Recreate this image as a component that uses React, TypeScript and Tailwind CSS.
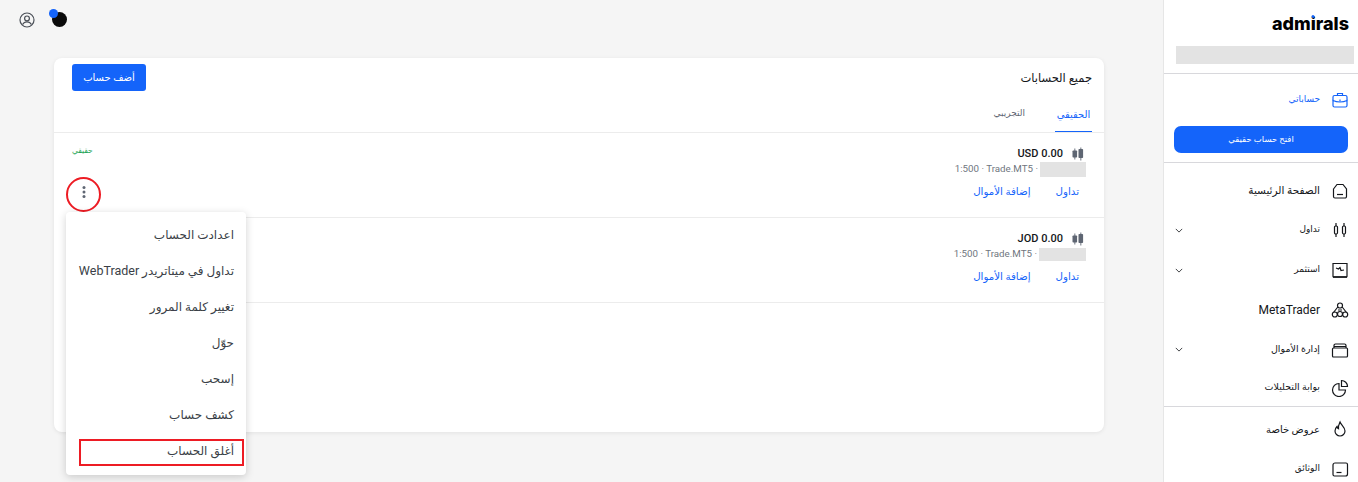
const blue = "text-[#1464fa]";

const Icon = ({ children, className = "text-[#14161a]" }: { children: React.ReactNode; className?: string }) => (
  <svg viewBox="0 0 18 18" fill="none" stroke="currentColor" strokeWidth="1.2" className={`w-[18px] h-[18px] shrink-0 ${className}`}>
    {children}
  </svg>
);

const Chevron = () => (
  <svg viewBox="0 0 10 6" fill="none" stroke="currentColor" strokeWidth="1" className="w-[8px] h-[5px] text-[#14161a]">
    <path d="M1 1l4 4 4-4" />
  </svg>
);

const Candles = () => (
  <svg viewBox="0 0 14 14" className="w-[14px] h-[14px] text-[#5f6673]" fill="currentColor">
    <rect x="1.5" y="3.5" width="4.6" height="7" rx="0.8" />
    <rect x="3.4" y="1.5" width="0.9" height="11" />
    <rect x="7.5" y="2" width="4.6" height="9" rx="0.8" />
    <rect x="9.4" y="0.5" width="0.9" height="13" />
  </svg>
);

const NavRow = ({ label, icon, chevron, h, size = "text-[10px]" }: { label: string; icon: React.ReactNode; chevron?: boolean; h: string; size?: string }) => (
  <div className={`flex items-center justify-between shrink-0 pl-[11px] pr-[9px] ${h}`}>
    <div>{chevron && <Chevron />}</div>
    <div className="flex items-center gap-[11px]">
      <span className={`text-[#14161a] ${size}`}>{label}</span>
      {icon}
    </div>
  </div>
);

const AccountRow = ({ currency, maskW, maskH }: { currency: string; maskW: string; maskH: string }) => (
  <div className="pt-[13px] pr-[18px] h-[85px] border-b border-[#ececec] flex flex-col items-end">
    <div className="flex items-center gap-[8px] h-[16px] pr-[1px]">
      <span className="text-[11px] font-medium text-[#14161a]" dir="ltr">{currency} 0.00</span>
      <Candles />
    </div>
    <div className="flex items-center text-[9.75px] text-[#6f7680] h-[15px]" dir="ltr">
      <span>1:500 · Trade.MT5 ·</span>
      <span className={`inline-block bg-[#e3e3e3] ml-[2px] ${maskW} ${maskH}`} />
    </div>
    <div className={`flex gap-[25px] mt-[7px] pr-[7px] text-[10.25px] ${blue}`} dir="rtl">
      <span>تداول</span>
      <span>إضافة الأموال</span>
    </div>
  </div>
);

export default function App() {
  const menu: React.ReactNode[] = [
    "اعدادت الحساب",
    <>تداول في ميتاتريدر <span className="text-[12.5px]">WebTrader</span></>,
    "تغيير كلمة المرور",
    "حوّل",
    "إسحب",
    "كشف حساب",
    "أغلق الحساب",
  ];

  return (
    <div className="flex h-[482px] w-[1358px] overflow-hidden bg-[#f5f5f5] font-['Roboto','DejaVu_Sans',sans-serif]">
      <main className="relative flex-1 min-w-0">
        <header className="flex items-start gap-[14px] pl-[19px] pt-[9px] h-[58px]">
          <svg viewBox="0 0 16 16" fill="none" stroke="#4a4f57" strokeWidth="1.2" className="w-[16px] h-[16px] mt-[3px]">
            <circle cx="8" cy="8" r="7" />
            <circle cx="8" cy="6.4" r="2.4" />
            <path d="M3.6 12.6c1-2 2.6-2.8 4.4-2.8s3.4.8 4.4 2.8" />
          </svg>
          <div className="relative w-[18px] h-[18px]">
            <div className="absolute left-[3px] top-[3px] w-[15px] h-[15px] rounded-full bg-[#0a0a0a]" />
            <div className="absolute left-0 top-0 w-[9px] h-[9px] rounded-full bg-[#1464fa]" />
          </div>
        </header>

        <section className="ml-[54px] w-[1050px] h-[374px] bg-white rounded-[8px] shadow-[0_1px_4px_rgba(0,0,0,0.08)]">
          <div className="h-[75px] border-b border-[#ececec] relative pr-[12px]">
            <div className="flex justify-between pl-[18px] pt-[6px]">
              <button className="w-[74px] h-[27px] rounded-[3px] bg-[#1464fa] text-white text-[10px]">أضف حساب</button>
              <span className="text-[11.5px] text-[#14161a] mt-[6px]">جميع الحسابات</span>
            </div>
            <div className="absolute right-[12px] bottom-0 flex items-end gap-[30px] text-[10px]" dir="rtl">
              <span className={`w-[37px] h-[25px] text-center border-b border-[#1464fa] ${blue}`}>الحقيقي</span>
              <span className="h-[25px] text-[#5f6673] text-[9px]">التجريبي</span>
            </div>
          </div>

          <div className="relative ml-[192px]">
            <AccountRow currency="USD" maskW="w-[46px]" maskH="h-[15px]" />
            <AccountRow currency="JOD" maskW="w-[47px]" maskH="h-[13px]" />
          </div>
          <div className="absolute left-[72px] top-[145px] text-[7.5px] text-[#12a150]">حقيقي</div>
        </section>

        {/* overlays: dots, annotation ring, dropdown */}
        <svg viewBox="0 0 4 12" className="absolute left-[82px] top-[186px] w-[4px] h-[12px]" fill="#5f6673">
          <circle cx="2" cy="1.6" r="1.5" />
          <circle cx="2" cy="6" r="1.5" />
          <circle cx="2" cy="10.4" r="1.5" />
        </svg>
        <div className="absolute left-[66px] top-[177px] w-[35px] h-[35px] rounded-full border-2 border-[#ed1c24]" />

        <div className="absolute left-[66px] top-[212px] w-[180px] h-[263px] bg-white rounded-[4px] shadow-[0_2px_8px_rgba(0,0,0,0.18)] flex flex-col items-end pr-[12px] pt-[5px]">
          {menu.map((m, i) => (
            <div key={i} className="h-[36px] flex items-center text-[12px] text-[#3a3f47]" dir="rtl">
              <span>{m}</span>
            </div>
          ))}
        </div>
        <div className="absolute left-[79px] top-[439px] w-[165px] h-[27px] border-2 border-[#ed1c24]" />
      </main>

      <aside className="w-[195px] shrink-0 bg-white border-l border-[#e6e6e6] flex flex-col">
        <div className="h-[74px] shrink-0 border-b border-[#d8d8dc] flex flex-col items-end">
          <div className="text-[18px] leading-[19px] font-extrabold text-black mt-[14px] mr-[9px] font-['Inter',sans-serif]">
            adm
            <span className="relative">
              i
              <span className="absolute left-1/2 -translate-x-1/2 top-[2px] w-[3px] h-[3px] rounded-full bg-[#1464fa]" />
            </span>
            rals
          </div>
          <div className="w-[178px] h-[18px] bg-[#e3e3e3] mt-[13px] mr-[4px]" />
        </div>

        <div className="h-[89px] shrink-0 border-b border-[#d8d8dc] flex flex-col">
          <div className="h-[52px] flex items-center justify-end pr-[9px] gap-[11px]">
            <span className={`text-[9px] ${blue}`}>حساباتي</span>
            <Icon className={blue}>
              <path d="M2 9.5V6a1.500 1.500 0 0 1 1.500-1.500h11A1.500 1.500 0 0 1 16 6v3.500" />
              <path d="M2 9.5c2 1 4.500 1.500 7 1.500s5-.5 7-1.500V14.500a1.500 1.500 0 0 1-1.500 1.500h-11A1.500 1.500 0 0 1 2 14.500z" />
              <path d="M6.500 4.500V2.500h5v2M9 8.500v2" />
            </Icon>
          </div>
          <button className="mx-auto w-[174px] h-[27px] rounded-[7px] bg-[#1464fa] text-white text-[8.5px]">افتح حساب حقيقي</button>
        </div>

        <NavRow h="h-[47px] pt-[8px]" size="text-[10.5px]" label="الصفحة الرئيسية" icon={
          <Icon><path d="M2.500 7L6 2.500h6L15.500 7v7.500a1.500 1.500 0 0 1-1.500 1.500H4a1.500 1.500 0 0 1-1.500-1.500z" /><path d="M6 12.500h6" /></Icon>
        } />
        <NavRow chevron h="h-[40px]" size="text-[9px]" label="تداول" icon={
          <Icon><rect x="3.500" y="5" width="3" height="8" rx="1.200" /><path d="M5 2v3M5 13v3M13 2v3M13 13v3" /><rect x="11.500" y="5" width="3" height="8" rx="1.200" /></Icon>
        } />
        <NavRow chevron h="h-[40px]" size="text-[9px]" label="استثمر" icon={
          <Icon><path d="M2 2.500h14V15.500a.5.5 0 0 1-.5.5h-13a.5.5 0 0 1-.5-.5z" /><path d="M2 16h14" strokeWidth="1.6" /><path d="M5 7l2.500 1 1.500-1.500 1 3 3-.5" /></Icon>
        } />
        <NavRow h="h-[40px]" size="text-[12px]" label="MetaTrader" icon={
          <Icon><circle cx="9" cy="4.500" r="2.500" /><circle cx="3.800" cy="13.500" r="2.500" /><circle cx="14.200" cy="13.500" r="2.500" /><circle cx="9" cy="13" r="2.500" /><path d="M6.800 6L2.500 11.500M11.200 6l4.300 5.500M7 9h4" /></Icon>
        } />
        <NavRow chevron h="h-[39px]" size="text-[9.5px]" label="إدارة الأموال" icon={
          <Icon><rect x="1.500" y="7" width="15" height="9" rx="1" /><path d="M3 7V4.500A1.500 1.500 0 0 1 4.500 3h9A1.500 1.500 0 0 1 15 4.500V7M3 5.500h12" /></Icon>
        } />
        <NavRow h="h-[38px] border-b border-[#d8d8dc]" size="text-[9.5px]" label="بوابة التحليلات" icon={
          <Icon><path d="M8 4.500a6.500 6.500 0 1 0 6.500 6.500H8z" /><path d="M10.500 1.500a6 6 0 0 1 6 6h-6z" /></Icon>
        } />
        <NavRow h="h-[44px]" size="text-[10px]" label="عروض خاصة" icon={
          <Icon><path d="M9 2c1 3 5 5 5 9a5 5 0 0 1-10 0c0-2 1-3.500 2-4.500.3 1.200.8 2 1.500 2.300C7.200 6.500 8 4 9 2z" /></Icon>
        } />
        <NavRow h="h-[36px]" size="text-[9px]" label="الوثائق" icon={
          <Icon><path d="M2 5a2 2 0 0 1 2-2h11a1.500 1.500 0 0 1 1.500 1.500V14a2 2 0 0 1-2 2H3.500A1.500 1.500 0 0 1 2 14.500z" /><path d="M5.500 12.500h5" /></Icon>
        } />
      </aside>
    </div>
  );
}
